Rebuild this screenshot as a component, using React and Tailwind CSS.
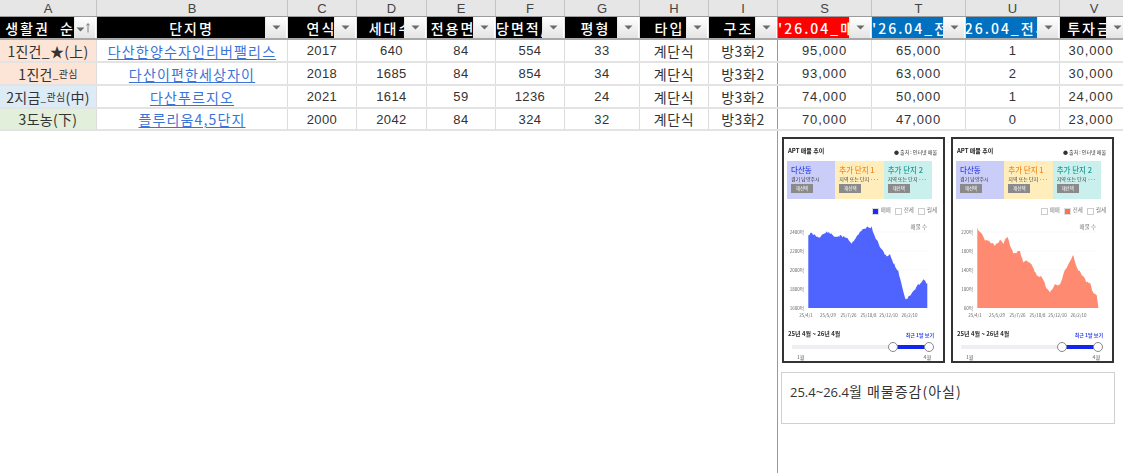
const KR = "font-['Noto_Sans_CJK_KR','Noto_Sans',sans-serif]";

const cols = [
  { l: 'A', w: 'w-[97px]', h: '생활권  순위', bg: 'bg-black', sort: true, pad: '' },
  { l: 'B', w: 'w-[191px]', h: '단지명', bg: 'bg-black', pad: '' },
  { l: 'C', w: 'w-[69px]', h: '연식', bg: 'bg-black', pad: '' },
  { l: 'D', w: 'w-[70px]', h: '세대수', bg: 'bg-black', pad: '' },
  { l: 'E', w: 'w-[69px]', h: '전용면적', bg: 'bg-black', pad: '' },
  { l: 'F', w: 'w-[69px]', h: '세대당면적/세대당', bg: 'bg-black', pad: '' },
  { l: 'G', w: 'w-[75px]', h: '평형', bg: 'bg-black', pad: 'pr-[12px]' },
  { l: 'H', w: 'w-[69px]', h: '타입', bg: 'bg-black', pad: 'pr-[8px]' },
  { l: 'I', w: 'w-[69px]', h: '구조', bg: 'bg-black', edge: true, pad: 'pr-[8px]' },
  { l: 'S', w: 'w-[94px]', h: "'26.04_매매", bg: 'bg-[#ff0000]', pad: '' },
  { l: 'T', w: 'w-[94px]', h: "'26.04_전세", bg: 'bg-[#0070c0]', pad: '' },
  { l: 'U', w: 'w-[94px]', h: "'26.04_전세수", bg: 'bg-[#0070c0]', pad: '' },
  { l: 'V', w: 'w-[69px]', h: '투자금', bg: 'bg-black', pad: 'pr-[8px]' },
];

const rows = [
  { a: <>1진건_★(上)</>, bg: 'bg-[#fce4d6]', h: 'h-[23px]', n: '다산한양수자인리버팰리스', v: ['2017', '640', '84', '554', '33', '계단식', '방3화2', '95,000', '65,000', '1', '30,000'] },
  { a: <>1진건<span className="text-[10px]">_관심</span></>, bg: 'bg-[#fce4d6]', h: 'h-[23px]', n: '다산이편한세상자이', v: ['2018', '1685', '84', '854', '34', '계단식', '방3화2', '93,000', '63,000', '2', '30,000'] },
  { a: <>2지금<span className="text-[10px]">_관심</span>(中)</>, bg: 'bg-[#ddebf7]', h: 'h-[23px]', n: '다산푸르지오', v: ['2021', '1614', '59', '1236', '24', '계단식', '방3화2', '74,000', '50,000', '1', '24,000'] },
  { a: <>3도농(下)</>, bg: 'bg-[#e2efda]', h: 'h-[22px]', n: '플루리움4,5단지', v: ['2000', '2042', '84', '324', '32', '계단식', '방3화2', '70,000', '47,000', '0', '23,000'] },
];

function FilterButton({ sort }) {
  return (
    <div className="absolute right-[1px] top-0 bottom-0 w-[21px] flex items-center justify-center bg-gradient-to-b from-[#ffffff] to-[#e4e4e4] border-l border-[#e8e8e8]">
      <svg width="9" height="5" viewBox="0 0 9 5" className={sort ? 'mt-[4px] -ml-[4px]' : ''}>
        <path d="M0.5 0.5H8.5L4.5 4.5Z" fill="#6a6a6a" />
      </svg>
      {sort && (
        <svg width="4" height="10" viewBox="0 0 4 10" className="ml-[1px]">
          <path d="M2 9.5V1M0.5 2.5L2 0.5L3.5 2.5" fill="none" stroke="#666" strokeWidth="0.8" />
        </svg>
      )}
    </div>
  );
}

function TableHead() {
  return (
    <>
      <div className="flex h-[17px] bg-[#e6e6e6] border-b border-[#9c9c9c]">
        {cols.map((c) => (
          <div key={c.l} className={`${c.w} shrink-0 flex items-center justify-center border-r border-[#c4c4c4] text-[13px] leading-none text-[#444] font-['Liberation_Sans',sans-serif]`}>
            {c.l}
          </div>
        ))}
      </div>
      <div className="flex h-[23px] border-b-2 border-[#a8a8a8]">
        {cols.map((c) => (
          <div key={c.l} className={`${c.w} ${c.edge ? 'border-[#9a9a9a]' : 'border-[#e2e2e2]'} shrink-0 relative overflow-hidden border-r bg-white`}>
            <div className={`${c.bg} ${c.pad} h-full flex items-center justify-center overflow-hidden mr-[1px]`}>
              <span className={`shrink-0 whitespace-pre text-white font-medium text-[14px] tracking-[2px] leading-none ${KR}`}>{c.h}</span>
            </div>
            <FilterButton sort={c.sort} />
          </div>
        ))}
      </div>
    </>
  );
}

function TableRow({ r }) {
  return (
    <div className={`flex ${r.h} border-b-2 border-[#e3e3e3]`}>
      <div className={`${cols[0].w} ${r.bg} shrink-0 flex items-center justify-center border-r border-[#dcdcdc] text-[14px] tracking-[0.3px] leading-none text-[#333] whitespace-nowrap ${KR}`}>
        {r.a}
      </div>
      <div className={`${cols[1].w} shrink-0 flex items-center justify-center border-r border-[#dcdcdc] ${KR}`}>
        <span className="text-[14px] tracking-[1.15px] leading-[18px] text-[#3b74d8] underline underline-offset-2 whitespace-nowrap">{r.n}</span>
      </div>
      {r.v.map((t, i) => {
        const c = cols[i + 2];
        const korean = i === 5 || i === 6;
        const comma = t.includes(',');
        return (
          <div
            key={c.l}
            className={`${c.w} ${c.edge ? 'border-[#9a9a9a]' : 'border-[#dcdcdc]'} ${c.l === 'V' ? 'pr-[6px]' : ''} shrink-0 flex items-center justify-center border-r text-[#333] whitespace-nowrap leading-none ${korean ? `text-[14px] tracking-[0.6px] ${KR}` : `text-[13px] font-['Liberation_Sans',sans-serif] ${comma ? 'tracking-[0.9px]' : 'tracking-[0.4px]'}`}`}
          >
            {t}
          </div>
        );
      })}
    </div>
  );
}

const bluePts = [[100,45],[108,40],[118,45],[130,52],[142,45],[155,36],[165,40],[178,50],[195,48],[215,52],[230,70],[245,48],[262,30],[275,22],[290,22],[297,45],[305,60],[320,90],[335,108],[345,105],[355,128],[370,155],[378,185],[385,215],[392,238],[400,232],[415,215],[430,195],[445,178],[457,190]];
const redPts = [[97,25],[110,40],[120,60],[135,65],[150,75],[165,60],[175,70],[187,48],[195,75],[205,100],[225,95],[235,125],[245,120],[260,135],[275,165],[290,170],[305,205],[315,215],[330,195],[345,195],[360,150],[372,130],[385,105],[395,140],[410,165],[425,185],[435,190],[445,220],[455,225],[460,262]];

function areaPath(pts, seed, dx) {
  let s = seed;
  const rand = () => {
    s = (s * 9301 + 49297) % 233280;
    return s / 233280 - 0.5;
  };
  const base = 89;
  const fx = (x) => x / 3 + dx;
  const fy = (y) => y / 3 + 1;
  const out = [];
  for (let i = 0; i < pts.length - 1; i++) {
    const [x0, y0] = pts[i];
    const [x1, y1] = pts[i + 1];
    const steps = Math.max(1, Math.round((x1 - x0) / 3));
    for (let k = 0; k < steps; k++) {
      const t = k / steps;
      out.push([fx(x0 + (x1 - x0) * t), fy(y0 + (y1 - y0) * t) + rand() * 2.2]);
    }
  }
  const last = pts[pts.length - 1];
  out.push([fx(last[0]), fy(last[1])]);
  return `M${fx(pts[0][0]).toFixed(1)} ${base} ` + out.map(([x, y]) => `L${x.toFixed(1)} ${Math.min(y, base).toFixed(1)}`).join(' ') + ` L${fx(last[0]).toFixed(1)} ${base} Z`;
}

const tiles = [
  { t: '다산동', s: '경기 남양주시', bg: 'bg-[#c9cdf8]', c: 'text-[#2f45e8]' },
  { t: '추가 단지 1', s: '지역 또는 단지 ···', bg: 'bg-[#ffeebb]', c: 'text-[#f58a1f]' },
  { t: '추가 단지 2', s: '지역 또는 단지 ···', bg: 'bg-[#c9f0ec]', c: 'text-[#1f9b94]' },
];

function Check({ label, on, color }) {
  return (
    <div className="flex items-center gap-[2px]">
      <span className={`w-[7px] h-[7px] border ${on ? `${color} border-[#ddd]` : 'bg-white border-[#ccc]'}`} />
      <span className="text-[5.5px] leading-none text-[#777]">{label}</span>
    </div>
  );
}

function ChartCard({ kind }) {
  const blue = kind === 'blue';
  const labels = blue ? ['2400억', '2200억', '2000억', '1800억', '1600억'] : ['220억', '180억', '140억', '100억', '60억'];
  const d = blue ? areaPath(bluePts, 11, -12) : areaPath(redPts, 23, -11);
  const xl = ['25/4/1', '25/5/29', '25/7/26', '25/10/8', '25/12/10', '26/2/10'];
  const xp = [19, 41, 61.5, 81.5, 101.5, 122.5];
  return (
    <div className={`w-[163px] h-[226px] shrink-0 border-2 border-[#333] bg-white flex flex-col px-[3px] pt-[7px] ${KR} blur-[0.35px]`}>
      <div className="flex items-center justify-between h-[10px] pl-[1px] pr-[3px]">
        <span className="text-[6px] font-bold text-[#222] leading-none">APT 매물 추이</span>
        <span className="text-[5px] text-[#333] leading-none">● 출처 : 인터넷 매물</span>
      </div>
      <div className="flex mt-[5px] mr-[8px] h-[38px]">
        {tiles.map((t) => (
          <div key={t.t} className={`${t.bg} flex-1 pl-[4px] pt-[5px] flex flex-col`}>
            <span className={`${t.c} text-[7.5px] font-medium leading-[8px] whitespace-nowrap`}>{t.t}</span>
            <span className="text-[5px] text-[#333] leading-[6px] mt-[2px] whitespace-nowrap">{t.s}</span>
            <span className="mt-[2px] w-[22px] h-[9px] flex items-center justify-center bg-[#8a8a8a] text-white text-[4.5px] leading-none">재선택</span>
          </div>
        ))}
      </div>
      <div className="flex justify-end gap-[4px] mt-[8px] pr-[3px] h-[8px] items-center">
        <Check label="매매" on={blue} color="bg-[#1a2cf5]" />
        <Check label="전세" on={!blue} color="bg-[#ff6f52]" />
        <Check label="월세" />
      </div>
      <svg width="155" height="112" viewBox="0 0 155 112" className="mt-[4px] shrink-0">
        <text x="140" y="10" textAnchor="end" fontSize="5.5" fill="#777">매물 수</text>
        {[0, 1, 2, 3].map((i) => (
          <line key={i} x1="21" x2="141" y1={13 + i * 19} y2={13 + i * 19} stroke="#f0f0f0" strokeWidth="0.5" />
        ))}
        <path d={d} fill={blue ? '#4f63ff' : '#ff8a72'} />
        {labels.map((l, i) => (
          <text key={l} x="17" y={14.5 + i * 19} textAnchor="end" fontSize="4.5" fill="#666">{l}</text>
        ))}
        {xl.map((l, i) => (
          <text key={l} x={xp[i]} y="98" textAnchor="middle" fontSize="4.5" fill="#666">{l}</text>
        ))}
      </svg>
      <div className="flex justify-between items-center pr-[6px] pl-[1px] -mt-[1px] h-[8px]">
        <span className="text-[6px] font-bold text-[#333] leading-none">25년 4월 ~ 26년 4월</span>
        <span className="text-[5px] font-bold text-[#2f45e8] leading-none">최근 1달 보기</span>
      </div>
      <div className="relative h-[4px] mt-[7px] ml-[5px] mr-[8px] bg-[#eeeff2]">
        <div className="absolute left-[102px] right-[3px] top-0 bottom-0 bg-[#1226f0]" />
        <div className="absolute left-[96px] -top-[3px] w-[10px] h-[10px] rounded-full bg-white border border-[#888]" />
        <div className="absolute right-[-2px] -top-[3px] w-[10px] h-[10px] rounded-full bg-white border border-[#888]" />
      </div>
      <div className="flex justify-between mt-[5px] pl-[10px] pr-[9px] text-[5px] text-[#555] leading-none">
        <span>1월</span>
        <span>4월</span>
      </div>
    </div>
  );
}

export default function App() {
  return (
    <div className="w-[1123px] h-[473px] overflow-hidden bg-white flex flex-col">
      <div className="w-[1129px] shrink-0">
        <TableHead />
        {rows.map((r) => (
          <TableRow key={r.n} r={r} />
        ))}
      </div>
      <div className="flex flex-1 min-h-0">
        <div className="w-[778px] shrink-0 border-r border-[#9a9a9a]" />
        <div className="flex flex-col pl-[4px]">
          <div className="flex gap-[6px] pt-[6px]">
            <ChartCard kind="blue" />
            <ChartCard kind="red" />
          </div>
          <div className="mt-[9px] ml-[-1px] w-[334px] h-[52px] border border-[#d0d0d0] px-[8px] pt-[9px] flex">
            <span className={`text-[14px] tracking-[1px] leading-[18px] text-[#333] whitespace-nowrap ${KR}`}>
              <span className="font-['Open_Sans',sans-serif] text-[13px] tracking-normal">25.4~26.4</span>월 매물증감(아실)
            </span>
          </div>
        </div>
      </div>
    </div>
  );
}
